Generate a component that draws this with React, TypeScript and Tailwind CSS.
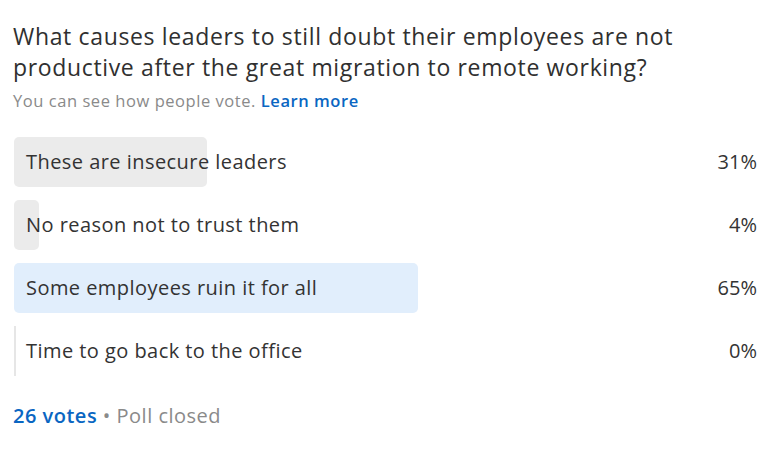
import React from "react";

interface PollOption {
  label: string;
  percent: number;
  winner?: boolean;
}

const options: PollOption[] = [
  { label: "These are insecure leaders", percent: 31 },
  { label: "No reason not to trust them", percent: 4 },
  { label: "Some employees ruin it for all", percent: 65, winner: true },
  { label: "Time to go back to the office", percent: 0 },
];

export default function App() {
  return (
    <div
      className="w-[783px] h-[450px] bg-white text-[#2b2b2b] overflow-hidden"
      style={{ fontFamily: '"Open Sans", "Noto Sans", sans-serif' }}
    >
      <div className="pl-[13px] pr-[26px] pt-[21px]">
        {/* Question */}
        <h1 className="w-[700px] text-[23px] leading-[31px] tracking-[0.65px] font-normal text-[#303030]">
          What causes leaders to still doubt their employees are not
          productive after the great migration to remote working?
        </h1>
        <p className="mt-[7px] text-[16.5px] leading-[22px] tracking-[0.55px] text-[#8a8a8a]">
          You can see how people vote.{" "}
          <span className="text-[#0a66c2] font-semibold">Learn more</span>
        </p>

        {/* Results */}
        <div className="mt-[25px] flex flex-col gap-[13px]">
          {options.map((opt) => (
            <div key={opt.label} className="flex items-center">
              <div className="relative ml-px w-[622px] h-[50px] flex items-center">
                <div
                  className={`absolute left-0 top-0 h-full ${
                    opt.percent === 0
                      ? "border-l-2 border-[#e6e6e6]"
                      : opt.winner
                      ? "bg-[#e1eefc] rounded-[5px]"
                      : "bg-[#ebebeb] rounded-[5px]"
                  }`}
                  style={{ width: opt.percent === 0 ? 2 : `${opt.percent}%` }}
                />
                <span className="relative pl-[12px] text-[20px] tracking-[0.45px] text-[#333333]">
                  {opt.label}
                </span>
              </div>
              <span className="ml-auto text-[20px] text-[#333333]">
                {opt.percent}%
              </span>
            </div>
          ))}
        </div>

        {/* Footer */}
        <div className="mt-[27px] text-[20px] leading-[26px] tracking-[0.5px]">
          <span className="text-[#0a66c2] font-semibold">26 votes</span>
          <span className="text-[#8a8a8a]"> • Poll closed</span>
        </div>
      </div>
    </div>
  );
}
